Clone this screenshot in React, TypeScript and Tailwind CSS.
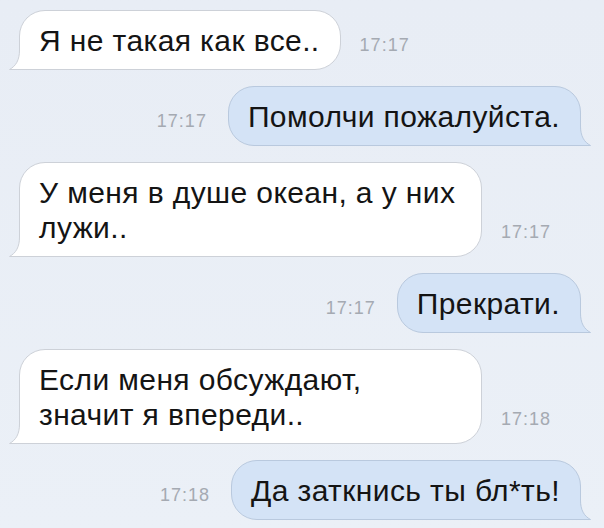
import React from 'react'

type Msg = {
    side: 'in' | 'out'
    lines: string[]
    time: string
    wide?: boolean
}

const messages: Msg[] = [
    { side: 'in', lines: ['Я не такая как все..'], time: '17:17' },
    { side: 'out', lines: ['Помолчи пожалуйста.'], time: '17:17' },
    { side: 'in', lines: ['У меня в душе океан, а у них', 'лужи..'], time: '17:17', wide: true },
    { side: 'out', lines: ['Прекрати.'], time: '17:17' },
    { side: 'in', lines: ['Если меня обсуждают,', 'значит я впереди..'], time: '17:18', wide: true },
    { side: 'out', lines: ['Да заткнись ты бл*ть!'], time: '17:18' },
]

const Tail = ({ fill, stroke, flip }: { fill: string; stroke: string; flip?: boolean }) => (
    <svg
        width="14"
        height="20"
        viewBox="0 0 14 20"
        className={flip ? 'absolute -right-[11px] -bottom-px -scale-x-100' : 'absolute -left-[11px] -bottom-px'}
    >
        <path d="M10.5 0 C10.5 10 7 16 0.5 19.5 L0.5 20 L14 20 L14 0 Z" fill={fill} />
        <path d="M10.5 0 C10.5 10 7 16 0.5 19.5 L14 19.5" fill="none" stroke={stroke} strokeWidth="1" />
    </svg>
)

const Time = ({ t, side }: { t: string; side: 'in' | 'out' }) => (
    <span
        className={`text-[18px] leading-[20px] tracking-[1px] text-[#a5aab2] mb-[15px] ${side === 'in' ? 'ml-[19px]' : 'mr-[21px]'}`}
    >
        {t}
    </span>
)

const Bubble = ({ m }: { m: Msg }) => {
    const isIn = m.side === 'in'
    return (
        <div
            className={`relative border pl-[19px] pr-[20px] pt-[12px] pb-[11px] rounded-[26px] ${
                isIn
                    ? 'bg-white border-[#cdd1d8] rounded-bl-none'
                    : 'bg-[#d4e3f6] border-[#b9c9de] rounded-br-none'
            } ${m.wide ? 'w-[463px]' : ''}`}
        >
            {m.lines.map((l, i) => (
                <div key={i} className="whitespace-nowrap">
                    {l}
                </div>
            ))}
            {isIn ? <Tail fill="#ffffff" stroke="#cdd1d8" /> : <Tail fill="#d4e3f6" stroke="#b9c9de" flip />}
        </div>
    )
}

const App = () => {
    return (
        <div className="w-[604px] h-[528px] overflow-hidden bg-gradient-to-b from-[#e8edf5] to-[#ebf0f7] font-['Liberation_Sans',Arial,sans-serif] text-[30px] leading-[35px] tracking-[0.4px] text-[#141414]">
            <div className="flex flex-col gap-[16px] pt-[10px]">
                {messages.map((m, i) =>
                    m.side === 'in' ? (
                        <div key={i} className="flex items-end pl-[19px]">
                            <Bubble m={m} />
                            <Time t={m.time} side="in" />
                        </div>
                    ) : (
                        <div key={i} className="flex items-end justify-end pr-[23px]">
                            <Time t={m.time} side="out" />
                            <Bubble m={m} />
                        </div>
                    )
                )}
            </div>
        </div>
    )
}

export default App
